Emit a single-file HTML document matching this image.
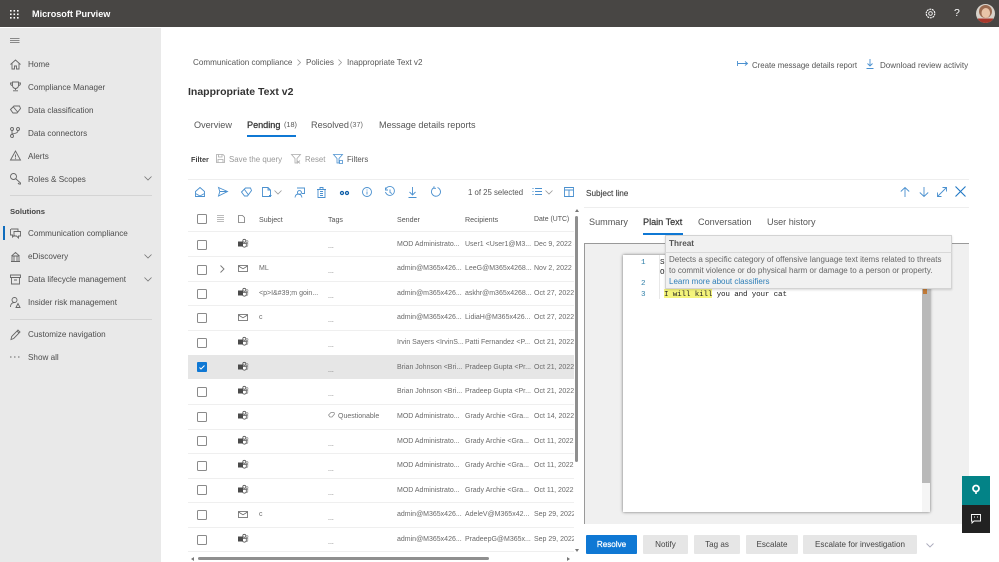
<!DOCTYPE html>
<html lang="en"><head><meta charset="utf-8"><title>Microsoft Purview</title>
<style>
html,body{margin:0;padding:0}
body{width:999px;height:562px;overflow:hidden;background:#fff;position:relative;font-family:"Liberation Sans",Arial,sans-serif;color:#444}
.a,.t{position:absolute;white-space:nowrap}
.t{line-height:12px}
svg{position:absolute;overflow:visible;fill:none}
.n{font-size:8.15px;color:#4d4d4d;left:28px;margin-top:1px}
.ni{stroke:#666;stroke-width:.9}
.b{stroke:#4a90cf;stroke-width:.9}
.c{position:absolute;left:197px;width:8px;height:8px;border:1px solid #8a8a8a;border-radius:1.5px;background:#fff}
.r{position:absolute;left:188px;width:386px;height:1px;background:#efefef}
.s{font-size:7px;color:#6a6a6a;margin-top:1px}
.h{font-size:7.1px;color:#555;margin-top:1px}
.btn{position:absolute;top:535px;height:19px;background:#e6e6e6;border-radius:1px;font-size:8.1px;line-height:20px;text-align:center;color:#444}
.tab{font-size:9.1px;color:#555;margin-top:1px}
.tb{font-size:9.1px;color:#555}
.m{font:7.6px/12px "Liberation Mono",monospace}
</style></head><body>
<svg width="0" height="0" style="position:absolute"><defs>
<g id="tm"><circle cx="6.300" cy="1.800" r="1.500" stroke="#555" stroke-width=".8"/><circle cx="9" cy="2.600" r="1" stroke="#888" stroke-width=".7"/><path d="M4.500 4.300h3.800v2.500a2 2 0 0 1-3.800 0z" stroke="#555" stroke-width=".8" fill="#fff"/><path d="M8.500 4.300h1.300v2a1.300 1.300 0 0 1-1.500 1.300" stroke="#888" stroke-width=".7"/><rect x="0" y="2.500" width="5" height="5" fill="#4a4a4a"/></g>
<g id="ml"><rect x=".5" y=".5" width="9" height="6" stroke="#666" stroke-width=".8" fill="#fff"/><path d="M.5 1l4.500 2.800L9.500 1" stroke="#666" stroke-width=".8"/></g>
</defs></svg>

<!-- top bar -->
<div class="a" style="left:0;top:0;width:999px;height:27px;background:#484644"></div>
<svg style="left:10px;top:10px" width="9" height="9"><g fill="#fff"><rect x="0" y="0" width="1.600" height="1.600"/><rect x="3.500" y="0" width="1.600" height="1.600"/><rect x="7" y="0" width="1.600" height="1.600"/><rect x="0" y="3.500" width="1.600" height="1.600"/><rect x="3.500" y="3.500" width="1.600" height="1.600"/><rect x="7" y="3.500" width="1.600" height="1.600"/><rect x="0" y="7" width="1.600" height="1.600"/><rect x="3.500" y="7" width="1.600" height="1.600"/><rect x="7" y="7" width="1.600" height="1.600"/></g></svg>
<div class="t" style="left:32px;top:8px;font-size:9.100px;font-weight:700;color:#fff">Microsoft Purview</div>
<svg style="left:925px;top:8px" width="11" height="11"><circle cx="5.500" cy="5.500" r="1.800" stroke="#fff" stroke-width=".9"/><circle cx="5.500" cy="5.500" r="4.300" stroke="#fff" stroke-width="1.100" stroke-dasharray="2 .7"/></svg>
<div class="t" style="left:954px;top:7px;font-size:10.500px;color:#fff">?</div>
<svg style="left:976px;top:4px" width="19" height="19"><defs><clipPath id="av"><circle cx="9.500" cy="9.500" r="9.500"/></clipPath></defs><g clip-path="url(#av)"><rect width="19" height="19" fill="#d8d2ca"/><ellipse cx="9.500" cy="7.500" rx="6.500" ry="6.500" fill="#9a6a50"/><ellipse cx="9.800" cy="9" rx="4.300" ry="5" fill="#e9c4a8"/><rect x="2" y="14.500" width="15" height="5" fill="#a8372b"/></g></svg>

<!-- sidebar -->
<div class="a" style="left:0;top:28px;width:161px;height:534px;background:#e9e9e9"></div>
<svg style="left:10px;top:38px" width="10" height="6"><path d="M0 .5h9.500M0 2.500h9.500M0 4.500h9.500" stroke="#888"/></svg>
<svg class="ni" style="left:10px;top:59px" width="11" height="11"><path d="M.5 5.500L5.500 1l5 4.500M2 4.500V10h2.500V7h2v3H9V4.500"/></svg>
<div class="t n" style="top:58px">Home</div>
<svg class="ni" style="left:10px;top:81px" width="11" height="11"><path d="M2.500 1h6v3.500a3 3 0 0 1-6 0zM2.500 2H.5c0 2 1 2.500 2 2.500M8.500 2h2c0 2-1 2.500-2 2.500M5.500 7.500V9M3 9.800h5"/></svg>
<div class="t n" style="top:81px">Compliance Manager</div>
<svg class="ni" style="left:10px;top:104px" width="11" height="11"><path d="M.5 5.500L4 2h5.500l1 2.500L7 9H3zM3 2.500l5 6"/></svg>
<div class="t n" style="top:104px">Data classification</div>
<svg class="ni" style="left:10px;top:127px" width="11" height="11"><circle cx="2" cy="2" r="1.500"/><circle cx="8" cy="2" r="1.500"/><circle cx="2" cy="9" r="1.500"/><path d="M2 3.500v4M8 3.500c0 2.500-3 3-6 3.500"/></svg>
<div class="t n" style="top:127px">Data connectors</div>
<svg class="ni" style="left:10px;top:150px" width="11" height="11"><path d="M5.500 1L.5 10h10zM5.500 4.500v3M5.500 8.300v.8"/></svg>
<div class="t n" style="top:150px">Alerts</div>
<svg class="ni" style="left:10px;top:173px" width="11" height="11"><circle cx="3.500" cy="3.500" r="3"/><path d="M5.500 5.500l5 4.500v1H9L8 10"/></svg>
<div class="t n" style="top:173px">Roles &amp; Scopes</div>
<svg style="left:144px;top:176px" width="8" height="5"><path d="M.5.500l3.500 3.500L7.500.500" stroke="#777" stroke-width=".8"/></svg>
<div class="a" style="left:10px;top:195px;width:142px;height:1px;background:#d4d4d4"></div>
<div class="t" style="left:10px;top:205px;margin-top:1px;font-size:7.700px;font-weight:700;color:#444">Solutions</div>
<div class="a" style="left:3px;top:226px;width:2px;height:14px;background:#0f6cbd"></div>
<svg class="ni" style="left:10px;top:228px" width="11" height="11"><path d="M1 1h7v2M.5 1v6h2v2l2-2M4 3.500h6.500V8H8.500v2l-2-2H4z"/></svg>
<div class="t n" style="top:227px">Communication compliance</div>
<svg class="ni" style="left:10px;top:251px" width="11" height="11"><path d="M1 10.500h9M2 10V5h7v5M4 5v5M7 5v5M1.500 5L5.500 1.500 9.500 5"/></svg>
<div class="t n" style="top:250px">eDiscovery</div>
<svg style="left:144px;top:254px" width="8" height="5"><path d="M.5.500l3.500 3.500L7.500.500" stroke="#777" stroke-width=".8"/></svg>
<svg class="ni" style="left:10px;top:274px" width="11" height="11"><path d="M.5 1h10v2.500H.5zM1.500 3.500V10h8V3.500M4 6h3"/></svg>
<div class="t n" style="top:273px">Data lifecycle management</div>
<svg style="left:144px;top:277px" width="8" height="5"><path d="M.5.500l3.500 3.500L7.500.500" stroke="#777" stroke-width=".8"/></svg>
<svg class="ni" style="left:10px;top:297px" width="11" height="11"><circle cx="4.500" cy="3" r="2.500"/><path d="M.5 10c0-3 1.500-4.500 4-4.500M8 6.500l-2 4h4z"/></svg>
<div class="t n" style="top:296px">Insider risk management</div>
<div class="a" style="left:10px;top:319px;width:142px;height:1px;background:#d4d4d4"></div>
<svg class="ni" style="left:10px;top:329px" width="11" height="11"><path d="M1 10.500l.7-3L8 1l2 2-6.300 6.500zM7 2l2 2"/></svg>
<div class="t n" style="top:328px">Customize navigation</div>
<svg style="left:10px;top:356px" width="10" height="2"><path d="M0 1h1.500M4 1h1.500M8 1h1.500" stroke="#666"/></svg>
<div class="t n" style="top:351px">Show all</div>

<!-- breadcrumb -->
<div class="t" style="left:193px;top:57px;font-size:8.100px;color:#555">Communication compliance</div>
<svg style="left:297px;top:59px" width="5" height="7"><path d="M.5.500l3 3-3 3" stroke="#999" stroke-width=".8"/></svg>
<div class="t" style="left:306px;top:57px;font-size:8.100px;color:#555">Policies</div>
<svg style="left:338px;top:59px" width="5" height="7"><path d="M.5.500l3 3-3 3" stroke="#999" stroke-width=".8"/></svg>
<div class="t" style="left:347px;top:57px;font-size:8.100px;color:#555">Inappropriate Text v2</div>
<svg class="b" style="left:737px;top:61px" width="11" height="6"><path d="M.5 0v5M.5 2.500h10M8 .5l2.500 2-2.500 2"/></svg>
<div class="t" style="left:752px;top:60px;font-size:7.850px;color:#555">Create message details report</div>
<svg class="b" style="left:866px;top:59px" width="8" height="11"><path d="M4 0v7M1.500 4.500L4 7l2.500-2.500M.5 9.500h7"/></svg>
<div class="t" style="left:880px;top:60px;font-size:8.050px;color:#555">Download review activity</div>
<div class="t" style="left:188px;top:86px;font-size:10.500px;font-weight:700;color:#333">Inappropriate Text v2</div>

<!-- tabs -->
<div class="t tab" style="left:194px;top:118px">Overview</div>
<div class="t tab" style="left:247px;top:118px;color:#333;-webkit-text-stroke:.25px #333">Pending</div>
<div class="t" style="left:284px;top:119px;font-size:7.300px;color:#555">(18)</div>
<div class="a" style="left:247px;top:135px;width:49px;height:2px;background:#0f78d4"></div>
<div class="t tab" style="left:311px;top:118px">Resolved</div>
<div class="t" style="left:350px;top:119px;font-size:7.300px;color:#666">(37)</div>
<div class="t tab" style="left:379px;top:118px">Message details reports</div>

<!-- filter -->
<div class="t" style="left:191px;top:154px;font-size:7.300px;font-weight:700;color:#444">Filter</div>
<svg style="left:216px;top:154px" width="9" height="9"><path d="M.5.500h6.500l1.500 1.500v6.500H.5zM2.500.500v2.500h3.500V.500M2 8.500V5.500h5v3" stroke="#aaa" stroke-width=".8"/></svg>
<div class="t" style="left:229px;top:154px;font-size:7.900px;color:#999">Save the query</div>
<svg style="left:291px;top:154px" width="10" height="10"><path d="M.5.500h9L6 4.500V9H4V4.500zM6 6.500l3 3M9 6.500l-3 3" stroke="#aaa" stroke-width=".8"/></svg>
<div class="t" style="left:305px;top:154px;font-size:7.800px;color:#999">Reset</div>
<svg class="b" style="left:333px;top:154px" width="10" height="10"><path d="M.5.500h9L6 4.500V9H4V4.500zM6.500 6.500h3v3h-3z" stroke-width=".8"/></svg>
<div class="t" style="left:347px;top:154px;font-size:7.800px;color:#555">Filters</div>

<!-- panel separators -->
<div class="a" style="left:188px;top:179px;width:781px;height:1px;background:#eee"></div>

<!-- toolbar -->
<svg class="b" style="left:195px;top:187px" width="10" height="10"><path d="M.5 9.500V4.500L5 .5l4.500 4v5zM.5 6.500L5 9l4.500-2.500"/></svg>
<svg class="b" style="left:218px;top:187px" width="10" height="10"><path d="M.5.500L9.500 4.500.5 9l1.300-4.500zM1.800 4.500h7.700"/></svg>
<svg class="b" style="left:241px;top:187px" width="11" height="10"><path d="M.5 5L4.500 1h5l1 2.500L6.500 9H3.500zM3.500 2.500l4 5.500"/></svg>
<svg class="b" style="left:262px;top:187px" width="10" height="10"><path d="M.5.500h5.500l2.500 2.500v6.500H.5zM6 .500v2.500h2.500M7 8.500h2.500"/></svg>
<svg style="left:274px;top:190px" width="8" height="5"><path d="M.5.500l3.500 3.500L7.500.500" stroke="#999" stroke-width=".8"/></svg>
<svg class="b" style="left:294px;top:187px" width="11" height="11"><path d="M3 1h7.500v5.500H8M5.500 3.500a2 2 0 1 1-.1 0M1 10.500c.3-2.500 1.700-3.500 3.500-3.500s3 1 3.500 3.500"/></svg>
<svg class="b" style="left:317px;top:187px" width="9" height="11"><path d="M1 2.500V10.500h7V2.500M0 2.500h9M3 2.500V.5h3v2M3 4.500h3M3 6.500h3M3 8.500h3"/></svg>
<svg style="left:340px;top:190px" width="9" height="6"><g stroke="#0f5fa8" stroke-width="1.300"><circle cx="2" cy="3" r="1.500"/><circle cx="7" cy="3" r="1.500"/></g></svg>
<svg class="b" style="left:362px;top:187px" width="10" height="10"><circle cx="5" cy="5" r="4.500"/><path d="M5 4.500V7.500M5 2.500v1"/></svg>
<svg class="b" style="left:385px;top:187px" width="10" height="10"><path d="M.8 2a4.500 4.500 0 1 1-.3 3M.5.500V3h2.500M5 2.500V5.500l2 1"/></svg>
<svg class="b" style="left:408px;top:187px" width="9" height="11"><path d="M4.500 0v7.500M1.500 5l3 3 3-3M.5 10.500h8"/></svg>
<svg class="b" style="left:431px;top:186px" width="10" height="11"><path d="M6.500 1.500a4.500 4.500 0 1 1-3.500.2M3 .3v2h2"/></svg>
<div class="t" style="left:468px;top:187px;font-size:7.800px;color:#555">1 of 25 selected</div>
<svg class="b" style="left:532px;top:188px" width="10" height="8"><path d="M3 .5h7M3 3.500h7M3 6.500h7M.5 .5h1M.5 3.500h1M.5 6.500h1"/></svg>
<svg style="left:545px;top:190px" width="8" height="5"><path d="M.5.500l3.500 3.500L7.500.500" stroke="#999" stroke-width=".8"/></svg>
<svg class="b" style="left:564px;top:187px" width="10" height="10"><path d="M.5.500h9v9H.5zM.5 3h9M5 3v6.500"/></svg>

<!-- table header -->
<div class="c" style="top:214px"></div>
<svg style="left:217px;top:215px" width="7" height="7"><path d="M0 .5h7M0 2.500h7M0 4.500h7M0 6.500h7" stroke="#bbb"/></svg>
<svg style="left:238px;top:215px" width="7" height="8"><path d="M.5.500h4l2 2v5H.5z" stroke="#777" stroke-width=".8"/></svg>
<div class="t h" style="left:259px;top:213px">Subject</div>
<div class="t h" style="left:328px;top:213px">Tags</div>
<div class="t h" style="left:397px;top:213px">Sender</div>
<div class="t h" style="left:465px;top:213px">Recipients</div>
<div class="t h" style="left:534px;top:213px;font-size:6.900px">Date (UTC)</div>
<div class="r" style="top:231px"></div>

<!-- selected row -->
<div class="a" style="left:188px;top:355px;width:386px;height:24px;background:#e6e6e6"></div>

<!-- rows -->
<div class="c" style="top:240px"></div><svg style="left:238px;top:239px" width="10" height="9"><use href="#tm"/></svg><div class="t s" style="left:328px;top:240px">...</div><div class="t s" style="left:397px;top:238px">MOD Administrato...</div><div class="t s" style="left:465px;top:238px">User1 &lt;User1@M3...</div><div class="t s" style="left:534px;top:238px">Dec 9, 2022 4</div>
<div class="r" style="top:256px"></div>
<div class="c" style="top:265px"></div><svg style="left:220px;top:265px" width="5" height="8"><path d="M.5.500l3.500 3.500-3.500 3.500" stroke="#777" stroke-width=".9"/></svg><svg style="left:238px;top:265px" width="10" height="8"><use href="#ml"/></svg><div class="t s" style="left:259px;top:262px">ML</div><div class="t s" style="left:328px;top:265px">...</div><div class="t s" style="left:397px;top:262px">admin@M365x426...</div><div class="t s" style="left:465px;top:262px">LeeG@M365x4268...</div><div class="t s" style="left:534px;top:262px">Nov 2, 2022</div>
<div class="r" style="top:281px"></div>
<div class="c" style="top:289px"></div><svg style="left:238px;top:288px" width="10" height="9"><use href="#tm"/></svg><div class="t s" style="left:259px;top:287px">&lt;p&gt;I&amp;#39;m goin...</div><div class="t s" style="left:328px;top:290px">...</div><div class="t s" style="left:397px;top:287px">admin@m365x426...</div><div class="t s" style="left:465px;top:287px">askhr@m365x4268...</div><div class="t s" style="left:534px;top:287px">Oct 27, 2022</div>
<div class="r" style="top:305px"></div>
<div class="c" style="top:313px"></div><svg style="left:238px;top:314px" width="10" height="8"><use href="#ml"/></svg><div class="t s" style="left:259px;top:311px">c</div><div class="t s" style="left:328px;top:314px">...</div><div class="t s" style="left:397px;top:311px">admin@M365x426...</div><div class="t s" style="left:465px;top:311px">LidiaH@M365x426...</div><div class="t s" style="left:534px;top:311px">Oct 27, 2022</div>
<div class="r" style="top:330px"></div>
<div class="c" style="top:338px"></div><svg style="left:238px;top:337px" width="10" height="9"><use href="#tm"/></svg><div class="t s" style="left:328px;top:339px">...</div><div class="t s" style="left:397px;top:336px">Irvin Sayers &lt;IrvinS...</div><div class="t s" style="left:465px;top:336px">Patti Fernandez &lt;P...</div><div class="t s" style="left:534px;top:336px">Oct 21, 2022</div>
<div class="a" style="left:197px;top:362px;width:10px;height:10px;background:#0f78d4;border-radius:1px"></div><svg style="left:199px;top:365px" width="6" height="5"><path d="M.5 2.500l1.500 1.500L5.500.5" stroke="#fff"/></svg><svg style="left:238px;top:362px" width="10" height="9"><use href="#tm"/></svg><div class="t s" style="left:328px;top:364px">...</div><div class="t s" style="left:397px;top:361px">Brian Johnson &lt;Bri...</div><div class="t s" style="left:465px;top:361px">Pradeep Gupta &lt;Pr...</div><div class="t s" style="left:534px;top:361px">Oct 21, 2022</div>
<div class="c" style="top:387px"></div><svg style="left:238px;top:386px" width="10" height="9"><use href="#tm"/></svg><div class="t s" style="left:328px;top:388px">...</div><div class="t s" style="left:397px;top:385px">Brian Johnson &lt;Bri...</div><div class="t s" style="left:465px;top:385px">Pradeep Gupta &lt;Pr...</div><div class="t s" style="left:534px;top:385px">Oct 21, 2022</div>
<div class="r" style="top:404px"></div>
<div class="c" style="top:412px"></div><svg style="left:238px;top:411px" width="10" height="9"><use href="#tm"/></svg><svg style="left:328px;top:412px" width="7" height="6"><path d="M.5 3L3 .5h3l.5 1.500L4 5H2z" stroke="#888" stroke-width=".7"/></svg><div class="t s" style="left:338px;top:410px">Questionable</div><div class="t s" style="left:397px;top:410px">MOD Administrato...</div><div class="t s" style="left:465px;top:410px">Grady Archie &lt;Gra...</div><div class="t s" style="left:534px;top:410px">Oct 14, 2022</div>
<div class="r" style="top:429px"></div>
<div class="c" style="top:436px"></div><svg style="left:238px;top:436px" width="10" height="9"><use href="#tm"/></svg><div class="t s" style="left:328px;top:438px">...</div><div class="t s" style="left:397px;top:435px">MOD Administrato...</div><div class="t s" style="left:465px;top:435px">Grady Archie &lt;Gra...</div><div class="t s" style="left:534px;top:435px">Oct 11, 2022</div>
<div class="r" style="top:453px"></div>
<div class="c" style="top:461px"></div><svg style="left:238px;top:460px" width="10" height="9"><use href="#tm"/></svg><div class="t s" style="left:328px;top:463px">...</div><div class="t s" style="left:397px;top:459px">MOD Administrato...</div><div class="t s" style="left:465px;top:459px">Grady Archie &lt;Gra...</div><div class="t s" style="left:534px;top:459px">Oct 11, 2022</div>
<div class="r" style="top:478px"></div>
<div class="c" style="top:485px"></div><svg style="left:238px;top:485px" width="10" height="9"><use href="#tm"/></svg><div class="t s" style="left:328px;top:487px">...</div><div class="t s" style="left:397px;top:484px">MOD Administrato...</div><div class="t s" style="left:465px;top:484px">Grady Archie &lt;Gra...</div><div class="t s" style="left:534px;top:484px">Oct 11, 2022</div>
<div class="r" style="top:502px"></div>
<div class="c" style="top:510px"></div><svg style="left:238px;top:511px" width="10" height="8"><use href="#ml"/></svg><div class="t s" style="left:259px;top:508px">c</div><div class="t s" style="left:328px;top:512px">...</div><div class="t s" style="left:397px;top:508px">admin@M365x426...</div><div class="t s" style="left:465px;top:508px">AdeleV@M365x42...</div><div class="t s" style="left:534px;top:508px">Sep 29, 2022</div>
<div class="r" style="top:527px"></div>
<div class="c" style="top:535px"></div><svg style="left:238px;top:534px" width="10" height="9"><use href="#tm"/></svg><div class="t s" style="left:328px;top:536px">...</div><div class="t s" style="left:397px;top:533px">admin@M365x426...</div><div class="t s" style="left:465px;top:533px">PradeepG@M365x...</div><div class="t s" style="left:534px;top:533px">Sep 29, 2022</div>
<div class="r" style="top:551px"></div>

<!-- scrollbars -->
<div class="a" style="left:574px;top:210px;width:6px;height:352px;background:#fff"></div>
<div class="a" style="left:575px;top:216px;width:3px;height:246px;background:#8f8f8f;border-radius:2px"></div>
<svg style="left:575px;top:209px" width="4" height="3"><path d="M0 3l2-3 2 3z" fill="#777"/></svg>
<svg style="left:575px;top:549px" width="4" height="3"><path d="M0 0l2 3 2-3z" fill="#777"/></svg>
<div class="a" style="left:198px;top:557px;width:291px;height:3px;background:#8f8f8f;border-radius:2px"></div>
<svg style="left:191px;top:557px" width="3" height="4"><path d="M3 0L0 2l3 2z" fill="#777"/></svg>
<svg style="left:567px;top:557px" width="3" height="4"><path d="M0 0l3 2-3 2z" fill="#777"/></svg>

<!-- right panel -->
<div class="t" style="left:586px;top:188px;font-size:8.200px;color:#444;-webkit-text-stroke:.15px #444">Subject line</div>
<svg class="b" style="left:900px;top:187px" width="10" height="10"><path d="M5 10V.5M.8 4.500L5 .5l4.200 4"/></svg>
<svg class="b" style="left:919px;top:187px" width="10" height="10"><path d="M5 0v9.500M.8 5.500L5 9.500l4.200-4"/></svg>
<svg class="b" style="left:937px;top:187px" width="10" height="10"><path d="M.5 9.500l9-9M5.500.5h4v4M.5 5.500v4h4"/></svg>
<svg style="left:955px;top:186px" width="11" height="11"><path d="M.5.500l10 10M10.500.5l-10 10" stroke="#1f77c4" stroke-width="1.100"/></svg>
<div class="a" style="left:584px;top:207px;width:385px;height:1px;background:#eee"></div>
<div class="t tb" style="left:589px;top:216px">Summary</div>
<div class="t tb" style="left:643px;top:216px;color:#333;-webkit-text-stroke:.2px #333">Plain Text</div>
<div class="a" style="left:643px;top:233px;width:40px;height:2px;background:#0f78d4"></div>
<div class="t tb" style="left:698px;top:216px">Conversation</div>
<div class="t tb" style="left:767px;top:216px">User history</div>

<!-- viewer -->
<div class="a" style="left:584px;top:243px;width:385px;height:281px;background:#f0f0f0;border-top:1px solid #999;border-left:1px solid #999;box-sizing:border-box"></div>
<div class="a" style="left:623px;top:255px;width:307px;height:257px;background:#fff;box-shadow:0 0 3px rgba(0,0,0,.55)"></div>
<div class="a" style="left:922px;top:255px;width:8px;height:257px;background:#f5f5f5"></div>
<div class="a" style="left:922px;top:255px;width:8px;height:228px;background:#b9b9b9"></div>
<div class="a" style="left:923px;top:289px;width:4px;height:5px;background:#c07a38"></div>
<div class="a" style="left:659px;top:255px;width:1px;height:44px;background:#e8e8e8"></div>
<div class="t m" style="left:641px;top:257px;color:#2f7fa8">1</div>
<div class="t m" style="left:641px;top:278px;color:#2f7fa8">2</div>
<div class="t m" style="left:641px;top:289px;color:#2f7fa8">3</div>
<div class="t m" style="left:660px;top:257px;color:#222">S</div>
<div class="t m" style="left:660px;top:267px;color:#222">O</div>
<div class="a" style="left:664px;top:289px;width:48px;height:9px;background:#f5f57c"></div>
<div class="t m" style="left:664px;top:288px;color:#222;letter-spacing:-.17px;margin-top:1px">I will kill you and your cat</div>

<!-- tooltip -->
<div class="a" style="left:665px;top:235px;width:285px;height:52px;background:#f1f1f1;border:1px solid #d3d3d3;box-shadow:0 1px 2px rgba(0,0,0,.15)"></div>
<div class="a" style="left:665px;top:252px;width:287px;height:1px;background:#d8d8d8"></div>
<div class="t" style="left:669px;top:238px;font-size:8.200px;font-weight:700;color:#555">Threat</div>
<div class="t" style="left:669px;top:254px;font-size:8px;color:#666">Detects a specific category of offensive language text items related to threats</div>
<div class="t" style="left:669px;top:265px;font-size:8px;color:#666">to commit violence or do physical harm or damage to a person or property.</div>
<div class="t" style="left:669px;top:276px;font-size:8px;color:#2f7fb8">Learn more about classifiers</div>

<!-- action buttons -->
<div class="btn" style="left:586px;width:51px;background:#0f78d4;color:#fff;-webkit-text-stroke:.25px #fff">Resolve</div>
<div class="btn" style="left:643px;width:45px">Notify</div>
<div class="btn" style="left:694px;width:46px">Tag as</div>
<div class="btn" style="left:746px;width:52px">Escalate</div>
<div class="btn" style="left:803px;width:114px">Escalate for investigation</div>
<svg style="left:926px;top:543px" width="8" height="5"><path d="M.5.500l3.500 3.500L7.500.500" stroke="#aab" stroke-width=".9"/></svg>

<!-- side floating -->
<div class="a" style="left:962px;top:476px;width:28px;height:29px;background:#038387"></div>
<svg style="left:971px;top:484px" width="10" height="12"><circle cx="5" cy="4.500" r="3" stroke="#fff" stroke-width="1.800"/><path d="M5 7v3" stroke="#fff" stroke-width="1.600"/></svg>
<div class="a" style="left:962px;top:505px;width:28px;height:28px;background:#222"></div>
<svg style="left:971px;top:514px" width="10" height="10"><path d="M.5.500h9v6.500H3L1 9V7H.5z" stroke="#fff" stroke-width=".9"/><path d="M3 3h1M6 3h1" stroke="#fff"/></svg>
</body></html>
